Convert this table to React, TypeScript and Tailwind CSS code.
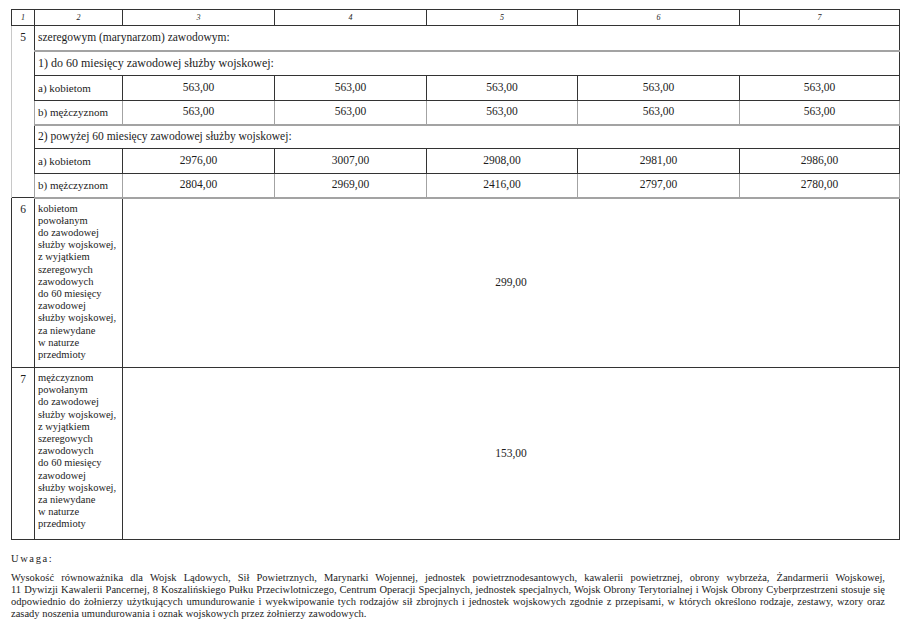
import React from "react";

const dark = "border-[#333]";
const gray = "border-[#a3a3a3]";

const colWidths = [23, 88, 152, 152, 151, 162, 160];

const rowsFirst = [
  { label: "a) kobietom", values: ["563,00", "563,00", "563,00", "563,00", "563,00"] },
  { label: "b) mężczyznom", values: ["563,00", "563,00", "563,00", "563,00", "563,00"] },
];

const rowsSecond = [
  { label: "a) kobietom", values: ["2976,00", "3007,00", "2908,00", "2981,00", "2986,00"] },
  { label: "b) mężczyznom", values: ["2804,00", "2969,00", "2416,00", "2797,00", "2780,00"] },
];

const itemLines = [
  "powołanym",
  "do zawodowej",
  "służby wojskowej,",
  "z wyjątkiem",
  "szeregowych",
  "zawodowych",
  "do 60 miesięcy",
  "zawodowej",
  "służby wojskowej,",
  "za niewydane",
  "w naturze",
  "przedmioty",
];

function ValueRows({ rows }: { rows: typeof rowsFirst }) {
  return (
    <>
      {rows.map((row, i) => {
        const last = i === rows.length - 1;
        const bottom = last ? `border-b-2 ${gray}` : `border-b ${dark}`;
        return (
          <tr key={row.label} className="h-[24.5px]">
            <td className={`border-l border-t ${dark} ${bottom} px-[3px] align-middle whitespace-nowrap text-[11px]`}>
              {row.label}
            </td>
            {row.values.map((v, j) => (
              <td
                key={j}
                className={`border-l border-t ${dark} ${bottom} ${j === 4 ? `border-r ${dark}` : ""} text-center align-middle`}
              >
                {v}
              </td>
            ))}
          </tr>
        );
      })}
    </>
  );
}

function ItemRow({ no, first, value, last }: { no: string; first: string; value: string; last?: boolean }) {
  const bottom = last ? `border-b ${dark}` : "";
  return (
    <tr className={last ? "h-[172px]" : "h-[170px]"}>
      <td className={`border-l border-t ${dark} ${bottom} text-center align-top pt-[3px]`}>{no}</td>
      <td
        className={`border-l border-t ${dark} ${bottom} align-top px-[3px] pt-[4px] text-[10.5px] leading-[12.2px] whitespace-nowrap`}
      >
        <div>{first}</div>
        {itemLines.map((l, i) => (
          <div key={i}>{l}</div>
        ))}
      </td>
      <td colSpan={5} className={`border-l border-t border-r ${dark} ${bottom} text-center align-middle`}>
        {value}
      </td>
    </tr>
  );
}

export default function App() {
  return (
    <div className="w-[917px] h-[634px] bg-white text-[#1c1c1c] [font-family:Liberation_Serif,serif] overflow-hidden">
      <div className="pt-[9px] pl-[11px]">
        <table className="border-collapse table-fixed w-[888px] text-[11.5px] [font-family:Liberation_Serif,serif]">
          <colgroup>
            {colWidths.map((w, i) => (
              <col key={i} style={{ width: w }} />
            ))}
          </colgroup>
          <tbody>
            {/* header numbers */}
            <tr className="h-[16px]">
              {["1", "2", "3", "4", "5", "6", "7"].map((n) => (
                <td key={n} className={`border ${dark} text-center italic text-[8px] leading-none`}>
                  {n}
                </td>
              ))}
            </tr>

            {/* item 5 */}
            <tr className="h-[25px]">
              <td rowSpan={7} className={`border-l border-l-[#c8c8c8] border-t ${dark} text-center align-top pt-[3px]`}>
                5
              </td>
              <td colSpan={6} className={`border-l border-t border-r ${dark} border-b-2 border-b-[#a3a3a3] px-[3px] align-middle`}>
                szeregowym (marynarzom) zawodowym:
              </td>
            </tr>
            <tr className="h-[25px]">
              <td colSpan={6} className={`border-l border-r border-b ${dark} px-[3px] align-middle text-[12px]`}>
                1) do 60 miesięcy zawodowej służby wojskowej:
              </td>
            </tr>
            <ValueRows rows={rowsFirst} />
            <tr className="h-[24px]">
              <td colSpan={6} className={`border-l border-r border-b ${dark} px-[3px] align-middle`}>
                2) powyżej 60 miesięcy zawodowej służby wojskowej:
              </td>
            </tr>
            <ValueRows rows={rowsSecond} />

            <ItemRow no="6" first="kobietom" value="299,00" />
            <ItemRow no="7" first="mężczyznom" value="153,00" last />
          </tbody>
        </table>
      </div>

      <div className="pl-[11px] w-[885px] text-[10.5px] leading-[12px]">
        <div className="mt-[13px] tracking-[1.6px]">Uwaga:</div>
        <div className="mt-[7px] text-justify">
          <div className="[text-align-last:justify]">
            Wysokość równoważnika dla Wojsk Lądowych, Sił Powietrznych, Marynarki Wojennej, jednostek powietrznodesantowych, kawalerii powietrznej, obrony wybrzeża, Żandarmerii Wojskowej,
          </div>
          <div className="[text-align-last:justify]">
            11 Dywizji Kawalerii Pancernej, 8 Koszalińskiego Pułku Przeciwlotniczego, Centrum Operacji Specjalnych, jednostek specjalnych, Wojsk Obrony Terytorialnej i Wojsk Obrony Cyberprzestrzeni stosuje się
          </div>
          <div className="[text-align-last:justify]">
            odpowiednio do żołnierzy użytkujących umundurowanie i wyekwipowanie tych rodzajów sił zbrojnych i jednostek wojskowych zgodnie z przepisami, w których określono rodzaje, zestawy, wzory oraz
          </div>
          <div>zasady noszenia umundurowania i oznak wojskowych przez żołnierzy zawodowych.</div>
        </div>
      </div>
    </div>
  );
}
